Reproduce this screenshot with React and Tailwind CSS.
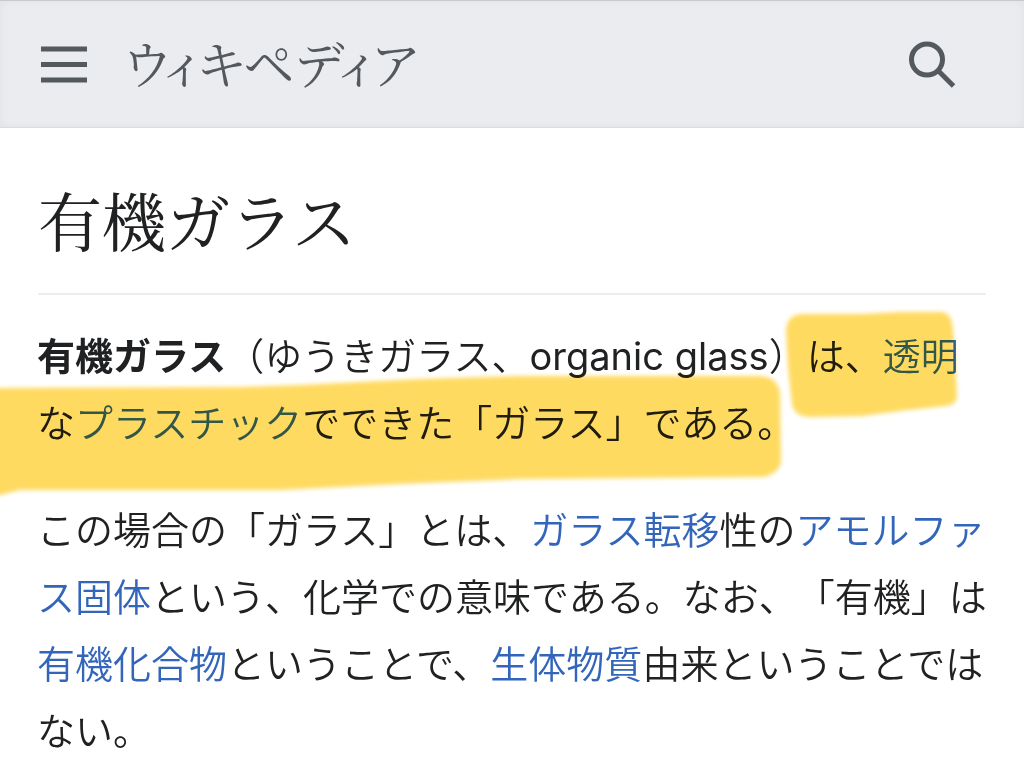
function MenuIcon() {
  return (
    <svg className="w-12 h-10" viewBox="0 0 48 40" fill="#54595d" aria-hidden="true">
      <rect x="1" y="2.500" width="46" height="5" />
      <rect x="1" y="18" width="46" height="5" />
      <rect x="1" y="33.500" width="46" height="5" />
    </svg>
  );
}

function SearchIcon() {
  return (
    <svg className="w-12 h-12" viewBox="0 0 48 48" fill="none" stroke="#54595d" strokeWidth="5" aria-hidden="true">
      <circle cx="19" cy="19.500" r="15.500" />
      <path d="M30 30.500L45.500 46" />
    </svg>
  );
}

// marker strokes drawn over the first paragraph
function Highlighter() {
  return (
    <svg
      className="absolute left-0 top-0 pointer-events-none mix-blend-multiply"
      width="1024"
      height="210"
      viewBox="0 0 1024 210"
      fill="#ffda60"
      aria-hidden="true"
    >
      <defs>
        <filter id="soft" x="-5%" y="-5%" width="110%" height="110%">
          <feGaussianBlur stdDeviation="2" />
        </filter>
      </defs>
      <g filter="url(#soft)">
        <path d="M786 36C787 24 792 19 804 19L860 19L900 17H942Q952 18 953 35L957 101Q957 109 946 111L908 115L862 121L812 122Q794 122 792 109L788 72Z" />
        <path d="M-20 93L240 92L300 90L420 84L520 81L760 81Q778 82 780 98L781 165Q781 177 764 182L520 184L400 189L280 195L20 195L-20 205Z" />
      </g>
    </svg>
  );
}

function WikiLink({ children }) {
  return (
    <a href="#" className="text-[#3366bb]">
      {children}
    </a>
  );
}

export default function App() {
  return (
    <div className="min-h-screen bg-white text-[#202122]">
      <header className="flex items-center h-32 px-10 bg-[#ebecf0] border-t border-t-[#c8c9ce] border-b border-b-[#dcdddf] shadow-[inset_0_0_8px_rgba(0,0,0,0.05)]">
        <button type="button" aria-label="メニュー">
          <MenuIcon />
        </button>
        <a
          href="#"
          className="ml-9 pb-1 text-[51px] leading-none text-[#54595d] font-normal [font-family:'Noto_Serif_CJK_JP','Noto_Sans_CJK_JP',serif] [font-feature-settings:'palt']"
        >
          ウィキペディア
        </a>
        <button type="button" aria-label="検索" className="ml-auto mr-7">
          <SearchIcon />
        </button>
      </header>

      <main>
        <div className="mx-[38px] pt-12 pb-[33px] border-b-2 border-[#eaecf0]">
          <h1 className="text-[64px] leading-[84px] font-normal [font-family:'Noto_Serif_CJK_JP','Noto_Sans_CJK_JP',serif]">
            有機ガラス
          </h1>
        </div>

        <div className="relative isolate bg-white px-[37px] pt-7 text-[38px] leading-[67px] font-[350] [text-spacing-trim:space-all] [font-family:Inter,'Noto_Sans_CJK_JP',sans-serif]">
          <p>
            <b className="font-bold">有機ガラス</b>（ゆうきガラス、<span className="font-normal">organic glass</span>）は、<WikiLink>透明</WikiLink>な<WikiLink>プラスチック</WikiLink>でできた「ガラス」である。
          </p>
          <p className="mt-10">
            この場合の「ガラス」とは、<WikiLink>ガラス転移</WikiLink>性の<WikiLink>アモルファス固体</WikiLink>という、化学での意味である。なお、「有機」は<WikiLink>有機化合物</WikiLink>ということで、<WikiLink>生体物質</WikiLink>由来ということではない。
          </p>
          <Highlighter />
        </div>
      </main>
    </div>
  );
}
